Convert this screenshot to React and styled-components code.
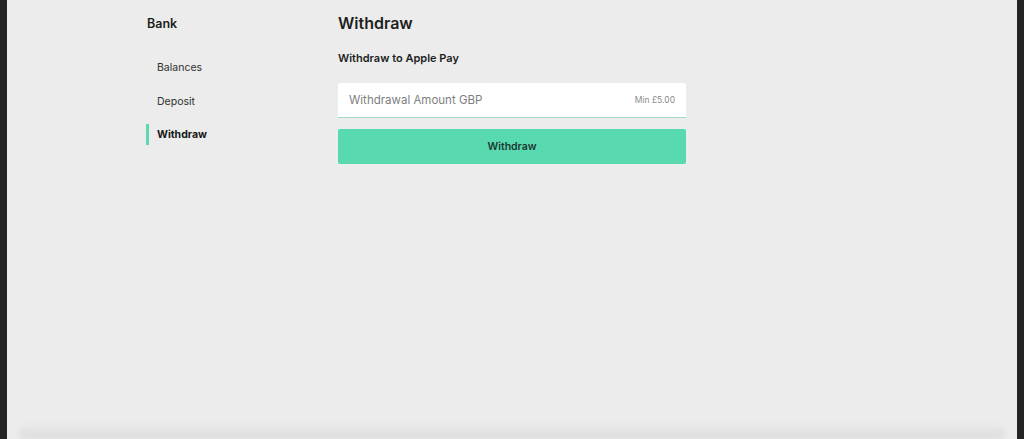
import React from "react";
import styled, { createGlobalStyle } from "styled-components";

const Global = createGlobalStyle`
  html, body { margin: 0; padding: 0; background: #222423; }
  body { font-family: Inter, "Noto Sans", "Liberation Sans", sans-serif; -webkit-font-smoothing: antialiased; }
  * { box-sizing: border-box; }
`;

const Frame = styled.div`
  margin: 0 7px;
  height: 439px;
  background: #ebeceb;
  position: relative;
  overflow: hidden;
  display: flex;
  flex-direction: column;
`;

const Layout = styled.div`
  flex: 1;
  display: flex;
  padding: 15px 0 0 140px;
`;

const Sidebar = styled.nav`
  width: 191px;
  display: flex;
  flex-direction: column;
`;

const SideTitle = styled.div`
  font-size: 12.5px;
  font-weight: 600;
  color: #1d1f1e;
  line-height: 16px;
  margin-top: 1px;
  margin-bottom: 25px;
`;

const NavList = styled.div`
  display: flex;
  flex-direction: column;
  gap: 12.5px;
`;

const NavItem = styled.div`
  height: 21px;
  display: flex;
  align-items: center;
  padding-left: 8px;
  font-size: 10.5px;
  font-weight: ${(p) => (p.$active ? 700 : 400)};
  color: ${(p) => (p.$active ? "#151716" : "#2e302f")};
  border-left: 3px solid ${(p) => (p.$active ? "#5fd8b1" : "transparent")};
  margin-left: -1px;
`;

const Main = styled.main`
  width: 348px;
  display: flex;
  flex-direction: column;
`;

const Heading = styled.h1`
  margin: 0;
  font-size: 16px;
  font-weight: 600;
  line-height: 16px;
  color: #1d1f1e;
`;

const SubHeading = styled.h2`
  margin: 20px 0 0;
  font-size: 11px;
  font-weight: 600;
  line-height: 14px;
  color: #1d1f1e;
`;

const InputBox = styled.div`
  margin-top: 18px;
  height: 35px;
  background: #ffffff;
  border-bottom: 1px solid #9fd9c4;
  border-radius: 2px 2px 0 0;
  display: flex;
  align-items: center;
  justify-content: space-between;
  padding: 0 11px;
`;

const Placeholder = styled.span`
  font-size: 11.5px;
  color: #7d7f7e;
`;

const Hint = styled.span`
  font-size: 8.5px;
  color: #8a8c8b;
`;

const Button = styled.button`
  margin-top: 11px;
  height: 35px;
  border: none;
  border-radius: 2px;
  background: #59d9b0;
  font-family: inherit;
  font-size: 10.5px;
  font-weight: 600;
  color: #1c3a30;
  cursor: pointer;
`;

const BottomShade = styled.div`
  height: 16px;
  margin: 0 12px;
  background: linear-gradient(to bottom, rgba(0,0,0,0), rgba(0,0,0,0.07));
  border-radius: 10px 10px 0 0;
  filter: blur(3px);
`;

export default function App() {
  return (
    <>
      <Global />
      <Frame>
        <Layout>
          <Sidebar>
            <SideTitle>Bank</SideTitle>
            <NavList>
              <NavItem>Balances</NavItem>
              <NavItem>Deposit</NavItem>
              <NavItem $active>Withdraw</NavItem>
            </NavList>
          </Sidebar>
          <Main>
            <Heading>Withdraw</Heading>
            <SubHeading>Withdraw to Apple Pay</SubHeading>
            <InputBox>
              <Placeholder>Withdrawal Amount GBP</Placeholder>
              <Hint>Min £5.00</Hint>
            </InputBox>
            <Button>Withdraw</Button>
          </Main>
        </Layout>
        <BottomShade />
      </Frame>
    </>
  );
}
